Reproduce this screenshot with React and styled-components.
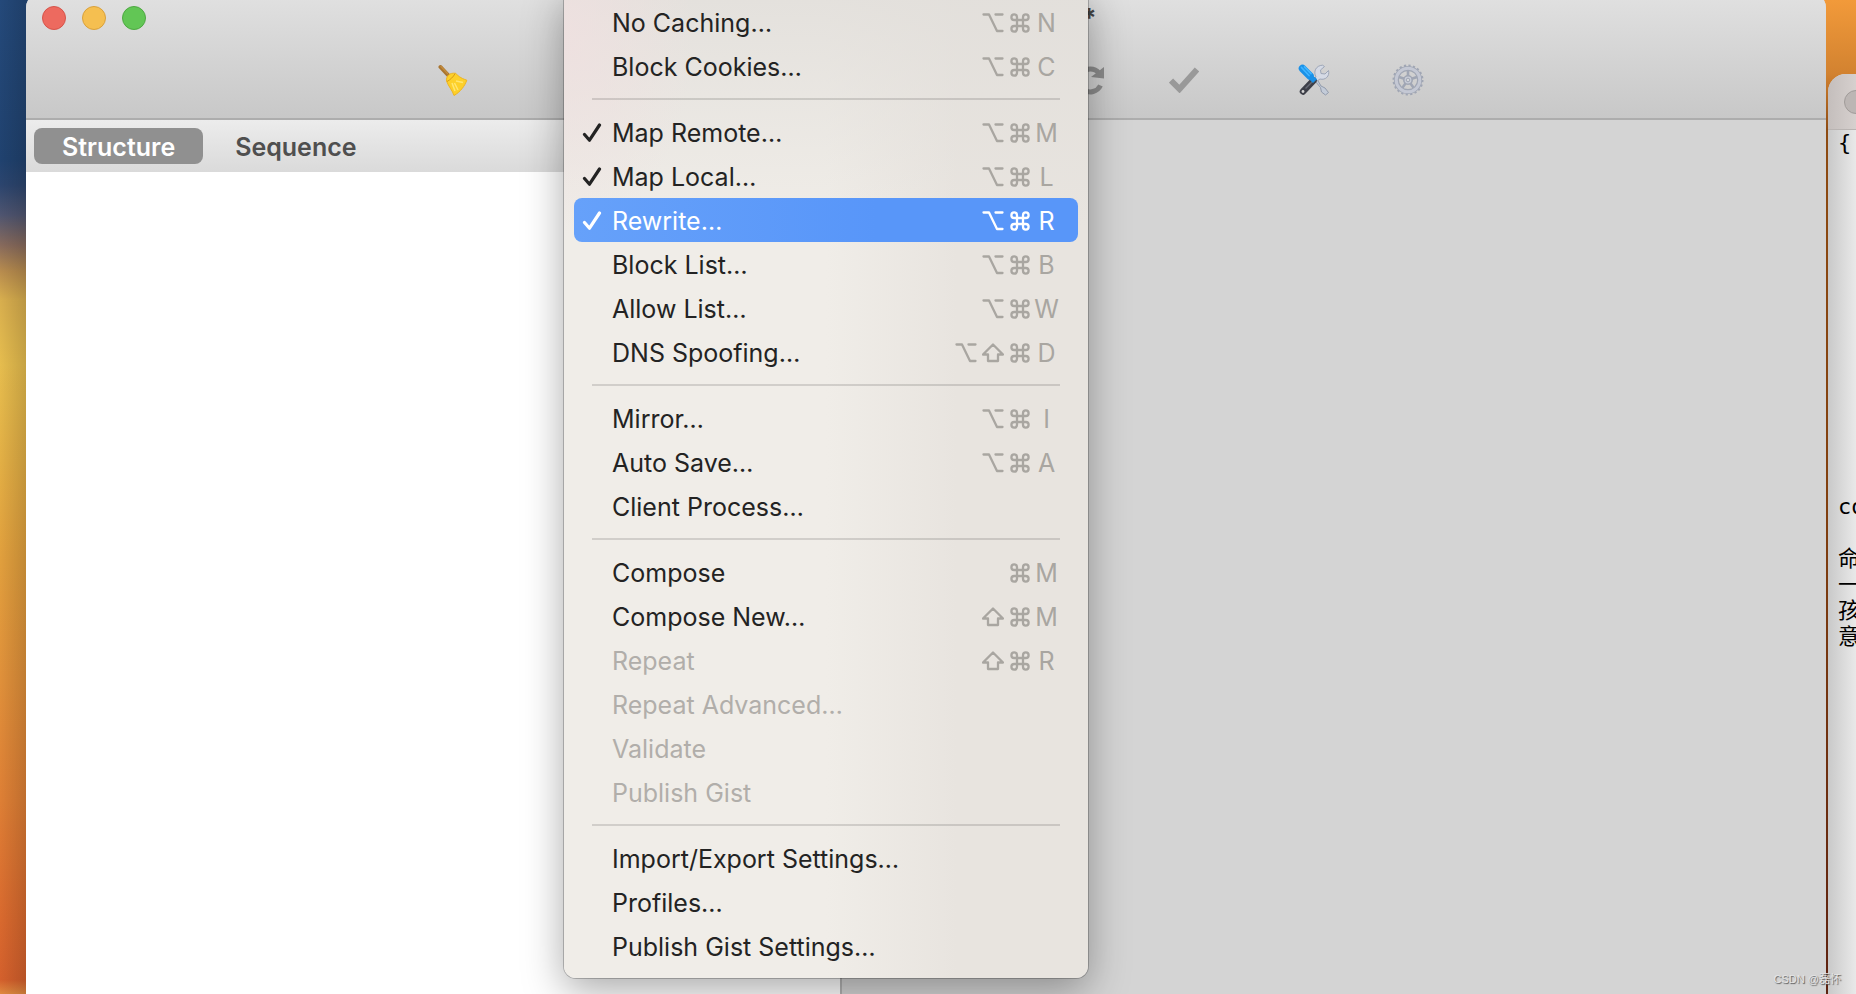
import React from 'react'
import styled, { createGlobalStyle } from 'styled-components'

const GlobalStyle = createGlobalStyle`
    * {
        box-sizing: border-box;
    }
    body {
        margin: 0;
        overflow: hidden;
        font-family: Inter, "Liberation Sans", sans-serif;
    }
    button {
        font: inherit;
        color: inherit;
        border: none;
        background: none;
        padding: 0;
    }
`

const Desktop = styled.div`
    position: relative;
    display: flex;
    gap: 2px;
    height: 100vh;
    padding-left: 26px;
    overflow: hidden;
    background:
        linear-gradient(#f29a3a, #d28230 74px, #8e4b12 130px, #82400f 50%, #5e2210) right / 50% 100% no-repeat,
        linear-gradient(90deg, rgba(0, 0, 0, 0), rgba(0, 0, 0, .14) 26px) left / 50% 100% no-repeat,
        linear-gradient(#24497a, #20426f 160px, #2c456e 185px, #4f5570 215px, #876a5c 245px, #b98d4e 272px, #d8ae4e 300px, #e6bd4e 365px, #e3af45 460px, #e19f3d 560px, #e0903a 680px, #de7f35 800px, #d9692e 920px, #d4602c 980px, #e08a40);
`

const MainWindow = styled.main`
    flex: 1;
    min-width: 0;
    display: flex;
    flex-direction: column;
    border-radius: 16px 16px 0 0;
    margin-top: -8px;
    overflow: hidden;
    background: #d4d4d4;
`

const Header = styled.header`
    height: 128px;
    padding-top: 8px;
    border-bottom: 2px solid #adadad;
    background: linear-gradient(#e1e1e1, #c8c8c8);
`

const TitleBar = styled.div`
    display: flex;
    align-items: center;
    height: 36px;
    padding-left: 16px;
`

const Light = styled.button`
    width: 24px;
    height: 24px;
    margin-right: 16px;
    border-radius: 50%;
    border: 1px solid ${props => props.$edge};
    background: ${props => props.$color};
`

const Title = styled.h1`
    margin: 0 0 0 920px;
    font-size: 26px;
    line-height: 36px;
    font-weight: 700;
    color: #444;
`

const Toolbar = styled.div`
    display: flex;
    justify-content: center;
    height: 88px;
    padding-left: 8px;
`

const ToolButton = styled.button`
    display: flex;
    align-items: center;
    justify-content: center;
    width: 94px;
    height: 88px;
`

const ToolSpace = styled.div`
    width: ${props => props.$width}px;
`

const Panes = styled.div`
    flex: 1;
    display: flex;
`

const Navigator = styled.section`
    width: 816px;
    border-right: 2px solid #b2b2b2;
    background: #fff;
`

const Tabs = styled.div`
    display: flex;
    align-items: center;
    height: 52px;
    padding: 0 8px;
    background: linear-gradient(#ececec, #dadada);
`

const Tab = styled.button`
    height: 36px;
    padding: 2px 28px 0;
    margin-right: 4px;
    border-radius: 8px;
    font-size: 25px;
    line-height: 34px;
    font-weight: 600;
    color: ${props => props.$active ? '#fff' : '#4f4f4f'};
    background: ${props => props.$active ? '#909090' : 'none'};
`

const SideWindow = styled.aside`
    width: 28px;
    margin-top: 74px;
    border-radius: 18px 0 0 0;
    overflow: hidden;
    background: linear-gradient(90deg, #c9c9c9, #e9e9e9);
`

const SideHeader = styled.div`
    height: 56px;
    padding: 16px 0 0 16px;
    border-bottom: 1px solid #b9b4b2;
    background: linear-gradient(90deg, #c4bebc, #d6d0ce);
`

const SideLight = styled.button`
    display: block;
    width: 24px;
    height: 24px;
    border-radius: 50%;
    border: 1px solid #a09b99;
    background: #bcb6b4;
`

const Code = styled.pre`
    margin: 0;
    padding-left: 10px;
    font-family: "DejaVu Sans Mono", "Noto Sans CJK SC", monospace;
    font-size: 22px;
    line-height: 26px;
    color: #000;
`

const Menu = styled.ul`
    position: absolute;
    top: -12px;
    left: 564px;
    width: 524px;
    margin: 0;
    padding: 12px 10px 10px;
    list-style: none;
    border-radius: 12px;
    background:
        radial-gradient(ellipse 130px 200px at 0 50px, rgba(240, 224, 224, .8), rgba(240, 224, 224, 0)),
        linear-gradient(rgba(226, 223, 219, .9), rgba(226, 223, 219, 0) 240px),
        linear-gradient(90deg, #f0ede8 50%, #e8e4df 75%);
    box-shadow: 0 0 0 1px rgba(0, 0, 0, .22), 0 12px 40px rgba(0, 0, 0, .34);
`

const MenuItem = styled.button`
    display: flex;
    align-items: center;
    width: 100%;
    height: 44px;
    padding: 2px 18px 0 8px;
    border-radius: 8px;
    font-size: 25px;
    line-height: 42px;
    text-align: left;
    color: ${props => props.$active ? '#fff' : '#232323'};
    background: ${props => props.$active ? 'linear-gradient(90deg, #66a1fa, #5896f9 60%)' : 'none'};
    &:disabled {
        color: #b1aeaa;
    }
`

const Mark = styled.span`
    display: flex;
    width: 30px;
`

const Label = styled.span`
    flex: 1;
    white-space: nowrap;
`

const Shortcut = styled.span`
    display: flex;
    color: ${props => props.$active ? '#fff' : '#a9a6a1'};
`

const Key = styled.kbd`
    display: flex;
    align-items: center;
    justify-content: center;
    width: 27px;
    font-family: inherit;
`

const Separator = styled.li`
    height: 22px;
    padding: 10px 18px;
    &::before {
        content: "";
        display: block;
        height: 2px;
        background: rgba(0, 0, 0, .13);
    }
`

const Watermark = styled.div`
    position: absolute;
    right: 15px;
    bottom: 7px;
    font-family: "Liberation Sans", "Noto Sans CJK SC", sans-serif;
    font-size: 11px;
    line-height: 16px;
    color: #e6e6e6;
    text-shadow: 1px 1px 1px #555;
`

const CheckMark = () => (
    <svg width="20" height="20" viewBox="0 0 20 20" fill="none" stroke="currentColor" strokeWidth="3.2" strokeLinecap="round" strokeLinejoin="round">
        <path d="M2.500 11.500L7.500 17.200L17.500 2" />
    </svg>
)

const OptionKey = () => (
    <svg width="22" height="20" viewBox="0 0 22 20" fill="none" stroke="currentColor" strokeWidth="2.3" strokeLinecap="round" strokeLinejoin="round">
        <path d="M1.500 1.500H7L15 18H20.500M13.500 1.500H20.500" />
    </svg>
)

const CommandKey = () => (
    <svg width="20" height="20" viewBox="0 0 20 20" fill="none" stroke="currentColor" strokeWidth="2.3">
        <path d="M7 7H13V13H7ZM7 7H4.2A2.8 2.8 0 1 1 7 4.2ZM13 7V4.2A2.8 2.8 0 1 1 15.8 7ZM13 13H15.8A2.8 2.8 0 1 1 13 15.8ZM7 13V15.8A2.8 2.8 0 1 1 4.2 13Z" />
    </svg>
)

const ShiftKey = () => (
    <svg width="22" height="20" viewBox="0 0 22 20" fill="none" stroke="currentColor" strokeWidth="2.3" strokeLinejoin="round">
        <path d="M11 1.500L21 11.500H16V18H6V11.500H1Z" />
    </svg>
)

const Broom = () => (
    <svg width="30" height="32" viewBox="0 0 30 32">
        <path d="M2.5 3L10 11" stroke="#a8742f" strokeWidth="4" strokeLinecap="round" />
        <path d="M3 2.6L9.5 9.6" stroke="#c48c3c" strokeWidth="1.4" strokeLinecap="round" />
        <path d="M8.5 17C8 12 11.500 8.500 17.500 9.300C20 11.500 22 14 28.800 16.200C27 21.500 22.500 28 16 31.500C14.500 26.500 10.500 22.500 8.500 17Z" fill="#fdd029" stroke="#edb423" />
        <path d="M9 17.500C12 16 15.500 12.800 17 9.700" stroke="#d89b16" fill="none" />
        <path d="M18 17L25 18.500M16.500 19L20 26M14 19L17 27" stroke="#ffe670" strokeWidth="1.500" />
    </svg>
)

const Refresh = () => (
    <svg width="30" height="30" viewBox="0 0 30 30" fill="none">
        <path d="M25.500 20.500A11.500 11.500 0 1 1 24 8" stroke="#8b8b8b" strokeWidth="5" />
        <path d="M29 2V13.500L16 12Z" fill="#8b8b8b" />
    </svg>
)

const Tick = () => (
    <svg width="30" height="26" viewBox="0 0 30 26" fill="none">
        <path d="M2 13.500L10.500 22L28 2.500" stroke="#999" strokeWidth="6" />
    </svg>
)

const Tools = () => (
    <svg width="32" height="32" viewBox="0 0 32 32" fill="none">
        <path d="M17 17L19.500 16L23 22L27 24L30.500 28.500L27.500 31L23.500 28L22.500 23.500Z" fill="#c3cbd8" stroke="#929bac" />
        <path d="M18 13C15 7.500 18 1.500 24.500 1.200L26.500 2.500L22.500 6L23 9.500L27 10L30.500 6.500C32 12 27.500 16.500 22 15L19 17L16.500 14.500Z" fill="#d5dae5" stroke="#9da6b8" />
        <path d="M5 27.500L15.500 16.500" stroke="#3d3f48" strokeWidth="6.500" strokeLinecap="round" />
        <path d="M7.500 24.500L15 17" stroke="#676a75" strokeWidth="1.500" />
        <circle cx="5" cy="27.500" r="1.400" fill="#d4d4d4" />
        <path d="M4.500 4.500L12 12" stroke="#1a91e8" strokeWidth="7.500" strokeLinecap="round" />
        <path d="M13 11L18.500 15L15 18.500L11 14.500Z" fill="#1a91e8" stroke="#1a91e8" strokeLinejoin="round" />
        <path d="M3.500 3.500L11 11.500M6.500 2.800L13 9.500" stroke="#3fb4ff" strokeWidth="1.800" strokeLinecap="round" />
    </svg>
)

const Gear = () => (
    <svg width="32" height="32" viewBox="0 0 32 32" fill="none" stroke="#a0a6b4">
        <circle cx="16" cy="16" r="14.300" strokeWidth="2.400" strokeDasharray="2.200 2.292" />
        <circle cx="16" cy="16" r="11.600" strokeWidth="5" />
        <circle cx="16" cy="16" r="11.800" stroke="#c4c8d4" strokeWidth="3" />
        <path d="M16 13V6.500M18.900 15L25 13M17.800 18.400L21.600 23.700M14.200 18.400L10.400 23.700M13.100 15L7 13" strokeWidth="2.600" />
        <circle cx="16" cy="16" r="4.200" fill="#c9cdd8" strokeWidth="1.600" />
        <circle cx="16" cy="16" r="1.800" fill="#d4d6da" />
    </svg>
)

const KEYS = {
    option: { label: 'Option', icon: <OptionKey /> },
    command: { label: 'Command', icon: <CommandKey /> },
    shift: { label: 'Shift', icon: <ShiftKey /> },
}

const GROUPS = [
    [
        { label: 'No Caching…', keys: ['option', 'command', 'N'] },
        { label: 'Block Cookies…', keys: ['option', 'command', 'C'] },
    ],
    [
        { label: 'Map Remote…', keys: ['option', 'command', 'M'], checked: true },
        { label: 'Map Local…', keys: ['option', 'command', 'L'], checked: true },
        { label: 'Rewrite…', keys: ['option', 'command', 'R'], checked: true, active: true },
        { label: 'Block List…', keys: ['option', 'command', 'B'] },
        { label: 'Allow List…', keys: ['option', 'command', 'W'] },
        { label: 'DNS Spoofing…', keys: ['option', 'shift', 'command', 'D'] },
    ],
    [
        { label: 'Mirror…', keys: ['option', 'command', 'I'] },
        { label: 'Auto Save…', keys: ['option', 'command', 'A'] },
        { label: 'Client Process…' },
    ],
    [
        { label: 'Compose', keys: ['command', 'M'] },
        { label: 'Compose New…', keys: ['shift', 'command', 'M'] },
        { label: 'Repeat', keys: ['shift', 'command', 'R'], disabled: true },
        { label: 'Repeat Advanced…', disabled: true },
        { label: 'Validate', disabled: true },
        { label: 'Publish Gist', disabled: true },
    ],
    [
        { label: 'Import/Export Settings…' },
        { label: 'Profiles...' },
        { label: 'Publish Gist Settings…' },
    ],
]

const CODE = '{' + '\n'.repeat(14) + 'co\n\n命\n一\n孩\n意'

const Item = ({ label, keys = [], checked, active, disabled }) => (
    <li>
        <MenuItem type="button" $active={active} disabled={disabled}>
            <Mark>{checked && <CheckMark />}</Mark>
            <Label>{label}</Label>
            <Shortcut $active={active}>
                {keys.map(key => (
                    <Key key={key} aria-label={KEYS[key] ? KEYS[key].label : key}>
                        {KEYS[key] ? KEYS[key].icon : key}
                    </Key>
                ))}
            </Shortcut>
        </MenuItem>
    </li>
)

const App = () => {

    return (
        <Desktop>
            <GlobalStyle />
            <MainWindow>
                <Header>
                    <TitleBar>
                        <Light type="button" aria-label="Close" $color="#ed6a5f" $edge="#d5544a" />
                        <Light type="button" aria-label="Minimize" $color="#f5bf50" $edge="#d8a03c" />
                        <Light type="button" aria-label="Zoom" $color="#62c655" $edge="#4ea842" />
                        <Title>*</Title>
                    </TitleBar>
                    <Toolbar>
                        <ToolButton type="button" aria-label="Clear"><Broom /></ToolButton>
                        <ToolSpace $width={543} />
                        <ToolButton type="button" aria-label="Repeat"><Refresh /></ToolButton>
                        <ToolButton type="button" aria-label="Validate"><Tick /></ToolButton>
                        <ToolSpace $width={36} />
                        <ToolButton type="button" aria-label="Tools"><Tools /></ToolButton>
                        <ToolButton type="button" aria-label="Settings"><Gear /></ToolButton>
                    </Toolbar>
                </Header>
                <Panes>
                    <Navigator>
                        <Tabs>
                            <Tab type="button" $active>Structure</Tab>
                            <Tab type="button">Sequence</Tab>
                        </Tabs>
                    </Navigator>
                </Panes>
            </MainWindow>
            <SideWindow>
                <SideHeader>
                    <SideLight type="button" aria-label="Close" />
                </SideHeader>
                <Code>{CODE}</Code>
            </SideWindow>
            <Menu>
                {GROUPS.map((group, index) => (
                    <React.Fragment key={index}>
                        {index > 0 && <Separator role="separator" />}
                        {group.map(item => <Item key={item.label} {...item} />)}
                    </React.Fragment>
                ))}
            </Menu>
            <Watermark>CSDN @磊怀</Watermark>
        </Desktop>
    )
}

export default App
